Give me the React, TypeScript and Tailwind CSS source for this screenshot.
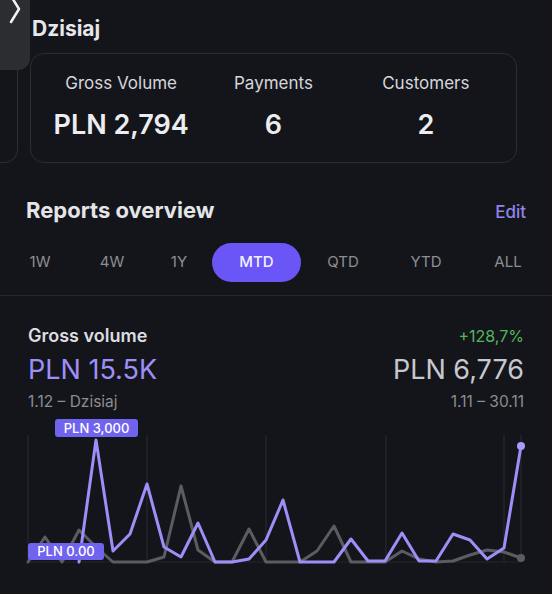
import React from "react";

const xs = Array.from({ length: 30 }, (_, i) => 28 + i * 17);

const current = [
  null, null, null, 560, 438, 549, 532, 482, 545, 555, 521, 560, 560, 557, 538,
  498, 560, 560, 560, 537, 559, 559, 531, 559, 559, 532, 538, 557, 546, 444,
];

const previous = [
  560, 535, 560, 528, 545, 560, 560, 560, 555, 484, 548, 560, 560, 527, 560,
  560, 560, 549, 524, 560, 560, 560, 549, 557, 560, 559, 553, 548, 550, 556,
];

const TOP = 412;

function toPoints(values: (number | null)[]) {
  return values
    .map((v, i) => (v === null ? null : `${xs[i]},${v - TOP}`))
    .filter(Boolean)
    .join(" ");
}

const stats = [
  { label: "Gross Volume", value: "PLN 2,794" },
  { label: "Payments", value: "6" },
  { label: "Customers", value: "2" },
];

const ranges = [
  { label: "1W", cls: "w-[56px]" },
  { label: "4W", cls: "w-[88px]" },
  { label: "1Y", cls: "w-[46px]" },
  { label: "MTD", cls: "w-[89px] ml-[10px]", active: true },
  { label: "QTD", cls: "w-[84px]" },
  { label: "YTD", cls: "w-[82px]" },
  { label: "ALL", cls: "w-[82px]" },
];

function Chart() {
  const grid = [28, 147, 266, 386, 504, 521];
  return (
    <div className="relative mt-[3px] h-[182px]">
      <svg width="552" height="182" viewBox="0 0 552 182" className="block">
        {grid.map((x) => (
          <line key={x} x1={x} x2={x} y1={433 - TOP} y2={560 - TOP} stroke="#2a2c32" strokeWidth="1" />
        ))}
        <line x1="28" x2="521" y1={560 - TOP} y2={560 - TOP} stroke="#24262b" strokeWidth="1" />
        <polyline
          points={toPoints(previous)}
          fill="none"
          stroke="#5b5c61"
          strokeWidth="3"
          strokeLinejoin="round"
          strokeLinecap="round"
        />
        <polyline
          points={toPoints(current)}
          fill="none"
          stroke="#9e8ff8"
          strokeWidth="3"
          strokeLinejoin="round"
          strokeLinecap="round"
        />
        <circle cx="521" cy={556 - TOP} r="4" fill="#5b5c61" />
        <circle cx="521" cy={444 - TOP} r="4" fill="#a89bfa" />
      </svg>
      {/* tooltips */}
      <div className="absolute left-[55px] top-[5px] h-[18px] w-[83px] rounded-[3px] bg-[#7064ee] text-center text-[13px] leading-[18px] font-medium text-white">
        PLN 3,000
      </div>
      <div className="absolute left-[28px] top-[129px] h-[17px] w-[76px] rounded-[3px] bg-[#7064ee] text-center text-[13px] leading-[17px] font-medium text-white">
        PLN 0.00
      </div>
    </div>
  );
}

export default function App() {
  return (
    <div className="relative h-[594px] w-[552px] overflow-hidden bg-[#14151a] font-['Inter',sans-serif] text-[#e4e5ea]">
      {/* side handle */}
      <div className="absolute left-0 top-0 z-10 h-[70px] w-[30px] rounded-br-[12px] bg-[#2c2d31]">
        <svg width="30" height="30" viewBox="0 0 30 30" className="block">
          <polyline points="11,-4 19,9 11,22" fill="none" stroke="#f2f2f4" strokeWidth="2.5" strokeLinecap="round" strokeLinejoin="round" />
        </svg>
      </div>

      {/* Today */}
      <div className="pl-[32px] pt-[17px] text-[21px] leading-[24px] font-bold text-[#e6e7eb]">
        Dzisiaj
      </div>
      <div className="mt-[12px] flex gap-[12px]">
        <div className="h-[110px] w-[18px] rounded-r-[14px] border-y border-r border-[#2b2d33]" />
        <div className="grid h-[110px] w-[487px] grid-cols-3 rounded-[14px] border border-[#2b2d33] px-[14px] pt-[19px] text-center">
          {stats.map((s) => (
            <div key={s.label} className="flex flex-col items-center gap-[16px]">
              <div className="text-[17px] leading-[20px] text-[#d5d6db]">{s.label}</div>
              <div className="text-[27px] leading-[32px] font-semibold text-[#ecedf0]">{s.value}</div>
            </div>
          ))}
        </div>
      </div>

      {/* Reports overview */}
      <div className="mt-[34px] flex items-baseline justify-between px-[26px]">
        <div className="text-[22px] leading-[26px] font-bold text-[#e4e5e9]">Reports overview</div>
        <div className="text-[17px] leading-[26px] font-medium text-[#8f85ea]">Edit</div>
      </div>
      <div className="mt-[18px] flex pl-[12px]">
        {ranges.map((r) => (
          <div
            key={r.label}
            className={`${r.cls} flex h-[39px] items-center justify-center text-[15px] ${
              r.active ? "rounded-full bg-[#6a55f7] font-medium text-[#f3f1ff]" : "text-[#8c8e95]"
            }`}
          >
            {r.label}
          </div>
        ))}
      </div>
      <div className="mt-[13px] h-px bg-[#26282d]" />

      {/* Gross volume */}
      <div className="mt-[30px] px-[28px]">
        <div className="flex items-baseline justify-between">
          <div className="text-[18px] leading-[20px] font-semibold text-[#dcdde1]">Gross volume</div>
          <div className="text-[16px] leading-[20px] text-[#4fb85a]">+128,7%</div>
        </div>
        <div className="mt-[8px] flex items-baseline justify-between text-[27px] leading-[32px]">
          <div className="text-[#9e8ff8]">PLN 15.5K</div>
          <div className="text-[#c6c8cf]">PLN 6,776</div>
        </div>
        <div className="mt-[7px] flex justify-between text-[15.5px] leading-[18px] text-[#8b8d94]">
          <div>1.12 – Dzisiaj</div>
          <div>1.11 – 30.11</div>
        </div>
      </div>
      <Chart />
    </div>
  );
}
